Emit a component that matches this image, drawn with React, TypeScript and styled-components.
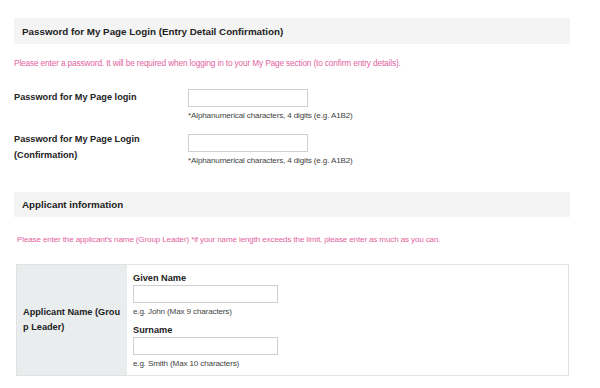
import styled, { createGlobalStyle } from "styled-components";

const GlobalStyle = createGlobalStyle`
  body {
    margin: 0;
    background: #ffffff;
    font-family: "Liberation Sans", Arial, sans-serif;
    color: #222222;
  }
`;

function App() {
  return (
    <>
      <GlobalStyle />
      <Page>
        <SectionHeader>
          Password for My Page Login (Entry Detail Confirmation)
        </SectionHeader>
        <Note>
          Please enter a password. It will be required when logging in to your
          My Page section (to confirm entry details).
        </Note>

        <FormRow>
          <RowLabel>Password for My Page login</RowLabel>
          <Field>
            <TextInput type="password" />
            <Help>*Alphanumerical characters, 4 digits (e.g. A1B2)</Help>
          </Field>
        </FormRow>
        <FormRow $top={12}>
          <RowLabel $shift={-3}>
            Password for My Page Login
            <br />
            (Confirmation)
          </RowLabel>
          <Field>
            <TextInput type="password" />
            <Help>*Alphanumerical characters, 4 digits (e.g. A1B2)</Help>
          </Field>
        </FormRow>

        <SectionHeader $top={25} $height={25}>
          Applicant information
        </SectionHeader>
        <SmallNote>
          Please enter the applicant's name (Group Leader) *if your name length
          exceeds the limit, please enter as much as you can.
        </SmallNote>

        <Table>
          <HeadCell>
            Applicant Name (Grou
            <br />p Leader)
          </HeadCell>
          <BodyCell>
            <SubLabel>Given Name</SubLabel>
            <NameInput type="text" />
            <Help>e.g. John (Max 9 characters)</Help>
            <SubLabel $top={5}>Surname</SubLabel>
            <NameInput type="text" />
            <Help>e.g. Smith (Max 10 characters)</Help>
          </BodyCell>
        </Table>
      </Page>
    </>
  );
}

const Page = styled.div`
  display: flex;
  flex-direction: column;
  padding: 0 30px 12px 14px;
`;

const SectionHeader = styled.div<{ $top?: number; $height?: number }>`
  display: flex;
  align-items: center;
  height: ${({ $height }) => $height ?? 26}px;
  margin-top: ${({ $top }) => $top ?? 18}px;
  padding-left: 8px;
  background: #f4f4f4;
  font-size: 9.8px;
  font-weight: bold;
  color: #222222;
`;

const Note = styled.p`
  margin: 13px 0 0;
  font-size: 8.3px;
  letter-spacing: -0.15px;
  line-height: 12px;
  color: #e4639e;
`;

const SmallNote = styled(Note)`
  margin: 17px 0 0 3px;
  font-size: 8.1px;
`;

const FormRow = styled.div<{ $top?: number }>`
  display: grid;
  grid-template-columns: 174px 1fr;
  align-items: start;
  margin-top: ${({ $top }) => $top ?? 20}px;
`;

const RowLabel = styled.div<{ $shift?: number }>`
  margin-top: ${({ $shift }) => $shift ?? 0}px;
  font-size: 9.2px;
  font-weight: bold;
  line-height: 16px;
  color: #222222;
`;

const Field = styled.div`
  display: flex;
  flex-direction: column;
  align-items: flex-start;
`;

const TextInput = styled.input`
  box-sizing: border-box;
  width: 120px;
  height: 18px;
  margin: 0;
  border: 1px solid #cfcfcf;
  background: #ffffff;
`;

const NameInput = styled(TextInput)`
  width: 145px;
`;

const Help = styled.div`
  margin-top: 3px;
  font-size: 8.1px;
  letter-spacing: -0.15px;
  line-height: 12px;
  color: #444444;
`;

const Table = styled.div`
  display: grid;
  grid-template-columns: 110px 1fr;
  margin: 18px 1px 0 2px;
  border: 1px solid #e2e2e2;
`;

const HeadCell = styled.div`
  display: flex;
  align-items: center;
  padding: 0 6px;
  background: #e9edee;
  font-size: 9.2px;
  font-weight: bold;
  line-height: 15px;
  color: #222222;
`;

const BodyCell = styled.div`
  display: flex;
  flex-direction: column;
  align-items: flex-start;
  padding: 6px 6px 5px;
`;

const SubLabel = styled.div<{ $top?: number }>`
  margin-top: ${({ $top }) => $top ?? 0}px;
  font-size: 9.2px;
  font-weight: bold;
  line-height: 14px;
  color: #222222;
`;

export default App;
